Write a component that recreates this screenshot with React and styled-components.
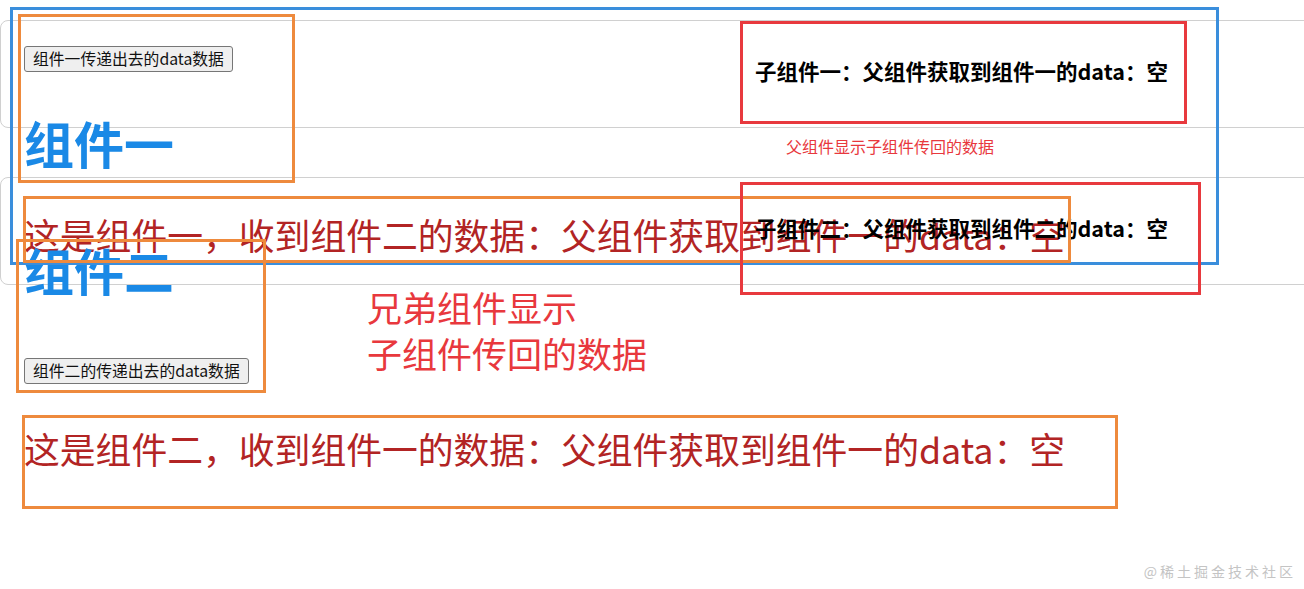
import styled, { createGlobalStyle } from 'styled-components'

const GlobalStyle = createGlobalStyle`
  html, body {
    margin: 0;
    padding: 0;
    background: #fff;
    overflow: hidden;
  }
  body {
    font-family: "Noto Sans CJK SC", "Noto Sans", sans-serif;
  }
`

const Page = styled.div`
  position: relative;
  width: 1304px;
  height: 589px;
  padding-top: 20px;
  box-sizing: border-box;
  overflow: hidden;
`

const Stack = styled.div`
  display: flex;
  flex-direction: column;
  gap: 49px;
`

const Card = styled.div`
  display: flex;
  align-items: center;
  width: 1340px;
  height: 108px;
  box-sizing: border-box;
  border: 1px solid #d0d0d0;
  border-radius: 8px;
`

const Left = styled.div`
  align-self: flex-start;
  display: flex;
  flex-direction: column;
  align-items: flex-start;
  flex-shrink: 0;
  width: 731px;
  padding-left: 23px;
`

const Button = styled.button`
  margin-top: ${p => p.$mt}px;
  height: 26px;
  padding: 0 8px;
  font-family: "Noto Sans CJK SC", sans-serif;
  font-size: 15.8px;
  line-height: 20px;
  color: #111;
  background: #efefef;
  border: 1px solid #767676;
  border-radius: 3px;
`

const Title = styled.h1`
  margin: ${p => p.$mt}px 0 0;
  font-size: 50px;
  line-height: 60px;
  font-weight: 700;
  color: #1a89e6;
  white-space: nowrap;
`

const Message = styled.p`
  margin: ${p => p.$mt}px 0 0;
  font-size: 35.8px;
  line-height: 44px;
  color: #b22424;
  white-space: nowrap;
`

const Received = styled.div`
  font-size: 21.5px;
  line-height: 30px;
  font-weight: 700;
  color: #000;
  white-space: nowrap;
  transform: translateY(-3px);
`

const Frame = styled.div`
  position: absolute;
  left: ${p => p.$x}px;
  top: ${p => p.$y}px;
  width: ${p => p.$w}px;
  height: ${p => p.$h}px;
  box-sizing: border-box;
  border: 3px solid ${p => p.$color};
  pointer-events: none;
`

const Note = styled.div`
  position: absolute;
  left: ${p => p.$x}px;
  top: ${p => p.$y}px;
  font-size: ${p => p.$size}px;
  line-height: ${p => p.$lh}px;
  color: #e8383d;
  white-space: nowrap;
`

const Watermark = styled.div`
  position: absolute;
  right: 8px;
  bottom: 8px;
  font-size: 14px;
  line-height: 20px;
  letter-spacing: 3px;
  color: #c4c4c4;
`

const BLUE = '#3a8edc'
const ORANGE = '#ee8a3d'
const RED = '#e8393e'

export default function App() {
  return (
    <Page>
      <GlobalStyle />
      <Stack>
        <Card>
          <Left>
            <Button $mt={25}>组件一传递出去的data数据</Button>
            <Title $mt={40}>组件一</Title>
            <Message $mt={40}>这是组件一，收到组件二的数据：父组件获取到组件一的data：空</Message>
          </Left>
          <Received>子组件一：父组件获取到组件一的data：空</Received>
        </Card>
        <Card>
          <Left>
            <Title $mt={61}>组件二</Title>
            <Button $mt={59}>组件二的传递出去的data数据</Button>
            <Message $mt={42}>这是组件二，收到组件一的数据：父组件获取到组件一的data：空</Message>
          </Left>
          <Received>子组件二：父组件获取到组件二的data：空</Received>
        </Card>
      </Stack>

      <Frame $x={10} $y={7} $w={1209} $h={258} $color={BLUE} />
      <Frame $x={18} $y={14} $w={277} $h={169} $color={ORANGE} />
      <Frame $x={23} $y={196} $w={1048} $h={67} $color={ORANGE} />
      <Frame $x={16} $y={239} $w={250} $h={154} $color={ORANGE} />
      <Frame $x={22} $y={415} $w={1096} $h={94} $color={ORANGE} />
      <Frame $x={740} $y={21} $w={447} $h={103} $color={RED} />
      <Frame $x={740} $y={182} $w={461} $h={113} $color={RED} />

      <Note $x={786} $y={136} $size={16} $lh={20}>父组件显示子组件传回的数据</Note>
      <Note $x={367} $y={284} $size={35} $lh={46}>
        兄弟组件显示
        <br />
        子组件传回的数据
      </Note>
      <Watermark>@稀土掘金技术社区</Watermark>
    </Page>
  )
}
